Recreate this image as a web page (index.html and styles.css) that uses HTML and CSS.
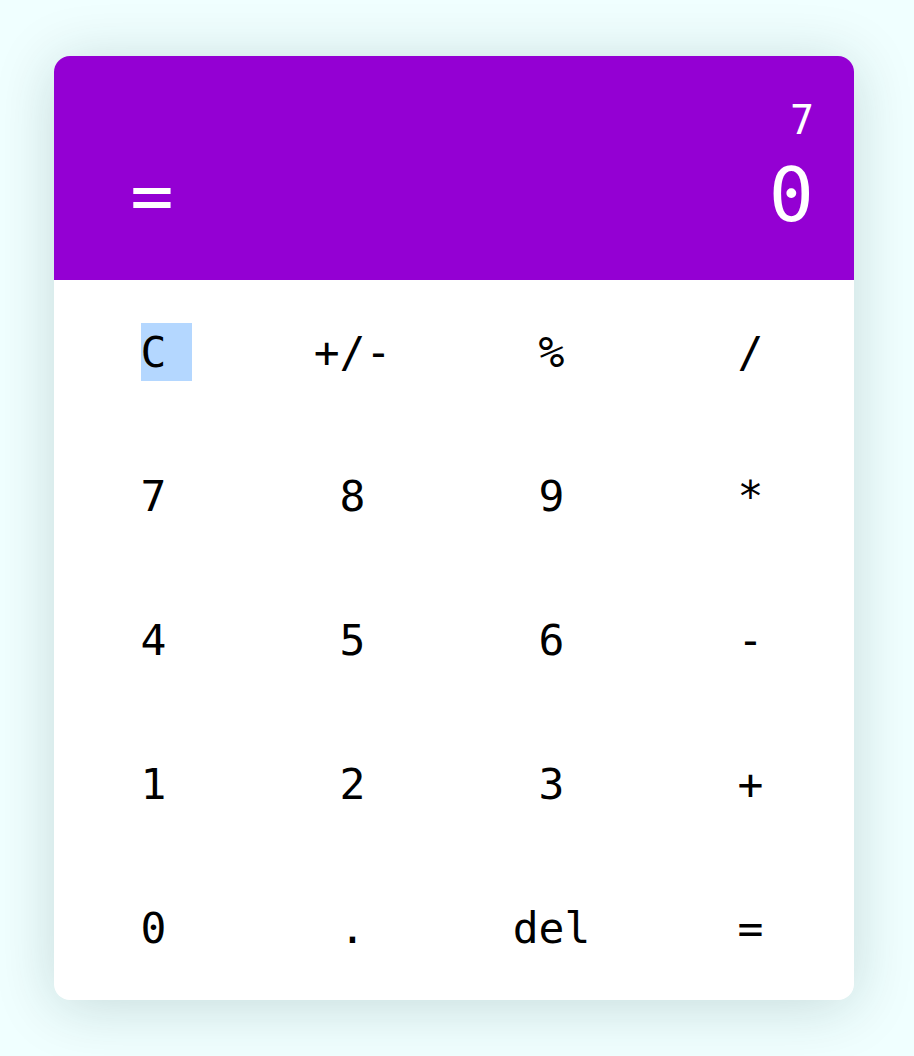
FILE: index.html
```html
<!DOCTYPE html>
<html lang="en">
<head>
<meta charset="utf-8">
<title>Calculator</title>
<link rel="stylesheet" href="styles.css">
</head>
<body>
  <div class="calculator">
    <div class="display">
      <div class="previous">7</div>
      <div class="current-row">
        <div class="operator">=</div>
        <div class="current">0</div>
      </div>
    </div>
    <div class="keypad">
      <div class="key"><span class="selected">C</span></div>
      <div class="key">+/-</div>
      <div class="key">%</div>
      <div class="key">/</div>
      <div class="key">7</div>
      <div class="key">8</div>
      <div class="key">9</div>
      <div class="key">*</div>
      <div class="key">4</div>
      <div class="key">5</div>
      <div class="key">6</div>
      <div class="key">-</div>
      <div class="key">1</div>
      <div class="key">2</div>
      <div class="key">3</div>
      <div class="key">+</div>
      <div class="key">0</div>
      <div class="key">.</div>
      <div class="key">del</div>
      <div class="key">=</div>
    </div>
  </div>
</body>
</html>
```

FILE: styles.css
```css
html {
  margin: 0;
  padding: 0;
  background: #f0ffff;
}

body {
  margin: 0;
  min-height: 100vh;
  box-sizing: border-box;
  padding: 56px 0 56px 54px;
  font-family: "DejaVu Sans Mono", "Liberation Mono", monospace;
}

.calculator {
  width: 800px;
  background: #ffffff;
  border-radius: 16px;
  overflow: hidden;
  box-shadow: 0 6px 60px rgba(0, 50, 50, 0.18);
}

.display {
  height: 224px;
  box-sizing: border-box;
  background: #9400d3;
  color: #ffffff;
  padding: 44px 40px 0 0;
  display: flex;
  flex-direction: column;
}

.previous {
  font-size: 40px;
  line-height: 40px;
  text-align: right;
}

.current-row {
  margin-top: 18px;
  display: flex;
  justify-content: space-between;
  align-items: center;
}

.operator {
  width: 196px;
  text-align: center;
  font-size: 72px;
  line-height: 75px;
}

.current {
  font-size: 75px;
  line-height: 75px;
  text-align: right;
}

.keypad {
  display: grid;
  grid-template-columns: repeat(4, 1fr);
  grid-template-rows: repeat(5, 144px);
  padding-right: 4px;
}

.key {
  display: flex;
  align-items: center;
  justify-content: center;
  font-size: 43px;
  line-height: 58px;
  color: #000000;
}

.selected {
  display: inline-block;
  background: #b4d7ff;
  padding-right: 26px;
  margin-right: -26px;
}
```
